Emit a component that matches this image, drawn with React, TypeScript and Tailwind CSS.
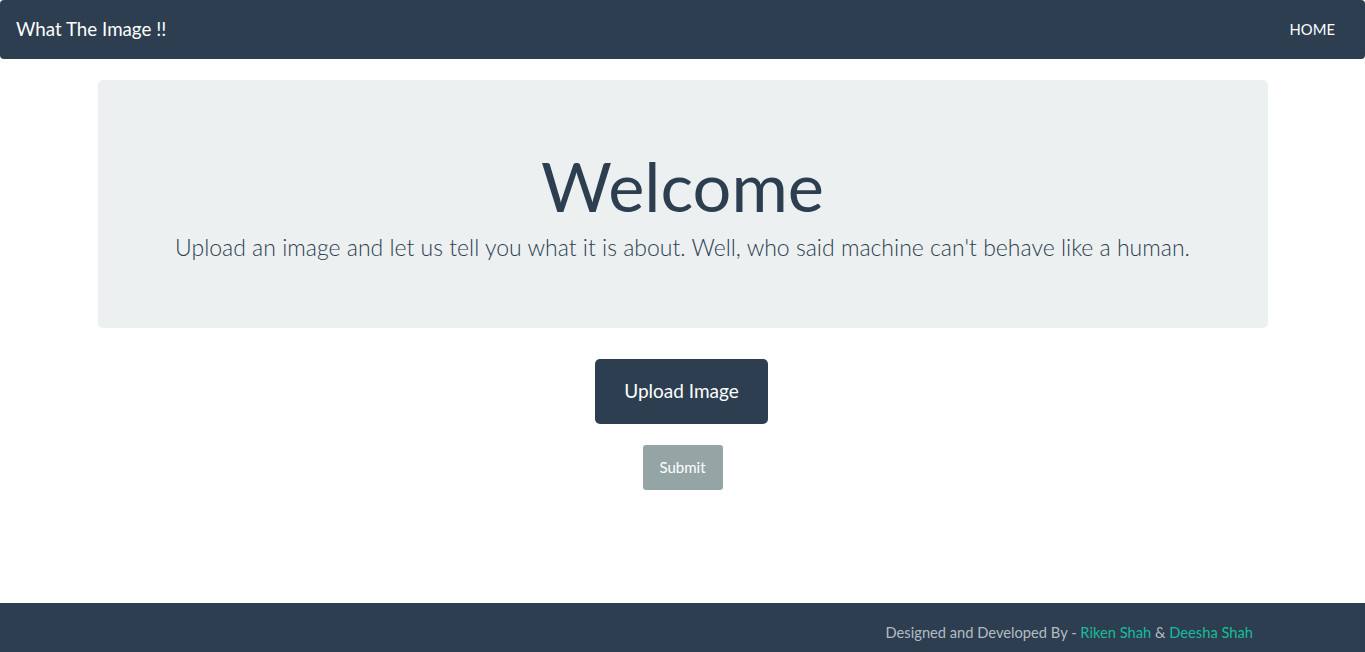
import React from "react";

export default function App() {
  return (
    <div
      className="min-h-screen flex flex-col bg-white text-[#2c3e50]"
      style={{ fontFamily: "Lato, 'Noto Sans', sans-serif" }}
    >
      <nav className="h-[59px] bg-[#2c3e50] rounded-[4px] flex items-center justify-between pl-[16px] pr-[30px] pb-[1px]">
        <span className="text-white text-[18.75px] leading-none">What The Image !!</span>
        <span className="text-white text-[14.8px] leading-none">HOME</span>
      </nav>

      <main className="flex flex-col items-center">
        <section className="mt-[21px] w-[1170px] h-[248px] bg-[#ecf0f1] rounded-[5px] flex flex-col items-center pt-[65px]">
          <h1 className="text-[68.5px] leading-[1.2] font-normal">Welcome</h1>
          <p className="text-[23px] font-light leading-[1.5] mt-[3px]">
            Upload an image and let us tell you what it is about. Well, who said machine can't behave like a human.
          </p>
        </section>

        <button className="mt-[31px] mr-[2px] w-[173px] h-[65px] bg-[#2c3e50] text-white text-[19px] rounded-[5px]">
          Upload Image
        </button>
        <button className="mt-[21px] w-[80px] h-[45px] bg-[#95a5a6] text-white text-[15px] rounded-[3px]">
          Submit
        </button>
      </main>

      <footer className="mt-auto h-[49px] bg-[#2c3e50] flex justify-end pr-[112px] pt-[22px]">
        <p className="text-[14.7px] leading-none text-[#b4bcc2]">
          Designed and Developed By - <span className="text-[#18bc9c]">Riken Shah</span> &amp;{" "}
          <span className="text-[#18bc9c]">Deesha Shah</span>
        </p>
      </footer>
    </div>
  );
}
